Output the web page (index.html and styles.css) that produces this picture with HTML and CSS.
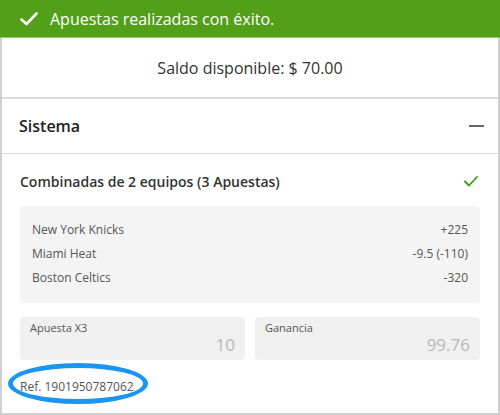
FILE: index.html
```html
<!DOCTYPE html>
<html lang="es">
<head>
<meta charset="utf-8">
<link rel="stylesheet" href="styles.css">
</head>
<body>
<div class="banner">
  <svg class="banner-check" width="18" height="14" viewBox="0 0 18 14"><path d="M1.5 7.5 L6.5 12 L16.5 1.5" fill="none" stroke="#fff" stroke-width="2.6" stroke-linecap="round" stroke-linejoin="round"/></svg>
  <span>Apuestas realizadas con éxito.</span>
</div>
<div class="panel">
  <div class="saldo">Saldo disponible: $ 70.00</div>
  <div class="section-head">
    <span class="section-title">Sistema</span>
    <span class="minus"></span>
  </div>
  <div class="body">
    <div class="combo-head">
      <span class="combo-title">Combinadas de 2 equipos (3 Apuestas)</span>
      <svg width="14" height="11" viewBox="0 0 14 11"><path d="M1 5.5 L5 9.5 L13 1" fill="none" stroke="#3a9c12" stroke-width="1.8" stroke-linecap="round" stroke-linejoin="round"/></svg>
    </div>
    <div class="picks">
      <div class="pick"><span>New York Knicks</span><span>+225</span></div>
      <div class="pick"><span>Miami Heat</span><span>-9.5 (-110)</span></div>
      <div class="pick"><span>Boston Celtics</span><span>-320</span></div>
    </div>
    <div class="fields">
      <div class="field"><div class="label">Apuesta X3</div><div class="value">10</div></div>
      <div class="field"><div class="label">Ganancia</div><div class="value">99.76</div></div>
    </div>
    <div class="ref-wrap">
      <span class="ref">Ref. 1901950787062</span>
      <span class="ellipse"></span>
    </div>
  </div>
</div>
</body>
</html>
```

FILE: styles.css
```css
html, body { margin: 0; padding: 0; background: #fff; }
body {
  font-family: "Open Sans", "Noto Sans", sans-serif;
  color: #333;
  width: 500px;
  height: 415px;
  overflow: hidden;
}
.banner {
  height: 37px;
  background: #52a018;
  border-bottom: 1px solid #8ccf5a;
  display: flex;
  align-items: center;
  padding-left: 20px;
  gap: 12px;
  color: #fff;
  font-size: 16px;
}
.banner-check { flex: none; }
.panel {
  border-left: 2px solid #d0d0d0;
  border-right: 2px solid #d0d0d0;
  border-bottom: 2px solid #d0d0d0;
  height: 375px;
}
.saldo {
  height: 59px;
  display: flex;
  align-items: center;
  justify-content: center;
  font-size: 16px;
  color: #333;
  border-bottom: 2px solid #dcdcdc;
}
.section-head {
  height: 54px;
  display: flex;
  align-items: center;
  justify-content: space-between;
  padding: 0 14px 0 17px;
  border-bottom: 1px solid #dcdcdc;
}
.section-title { font-size: 16px; font-weight: 600; color: #222; }
.minus { width: 15px; height: 2px; background: #666; }
.body { padding: 0 18px 0 18px; }
.combo-head {
  height: 50px;
  display: flex;
  align-items: center;
  justify-content: space-between;
  padding: 2px 2px 0 0;
}
.combo-title { font-size: 14px; font-weight: 600; color: #333; }
.picks {
  background: #f4f4f4;
  border-radius: 4px;
  padding: 12px 12px 13px 12px;
  display: flex;
  flex-direction: column;
}
.pick {
  display: flex;
  justify-content: space-between;
  font-size: 12px;
  color: #555;
  line-height: 24px;
}
.fields {
  display: flex;
  gap: 10px;
  margin-top: 14px;
}
.field {
  flex: 1;
  background: #f0f0f0;
  border-radius: 4px;
  height: 43px;
  padding: 4px 10px 0 10px;
  box-sizing: border-box;
}
.label { font-size: 11px; color: #555; line-height: 14px; }
.value { text-align: right; font-size: 17px; color: #b8b8b8; line-height: 20px; }
.ref-wrap {
  position: relative;
  margin-top: 16px;
  height: 20px;
  display: flex;
  align-items: center;
}
.ref { font-size: 12px; color: #555; }
.ellipse {
  position: absolute;
  left: -12px;
  top: -13px;
  width: 130px;
  height: 31px;
  border: 5px solid #1a96f0;
  border-radius: 50%;
}
```
